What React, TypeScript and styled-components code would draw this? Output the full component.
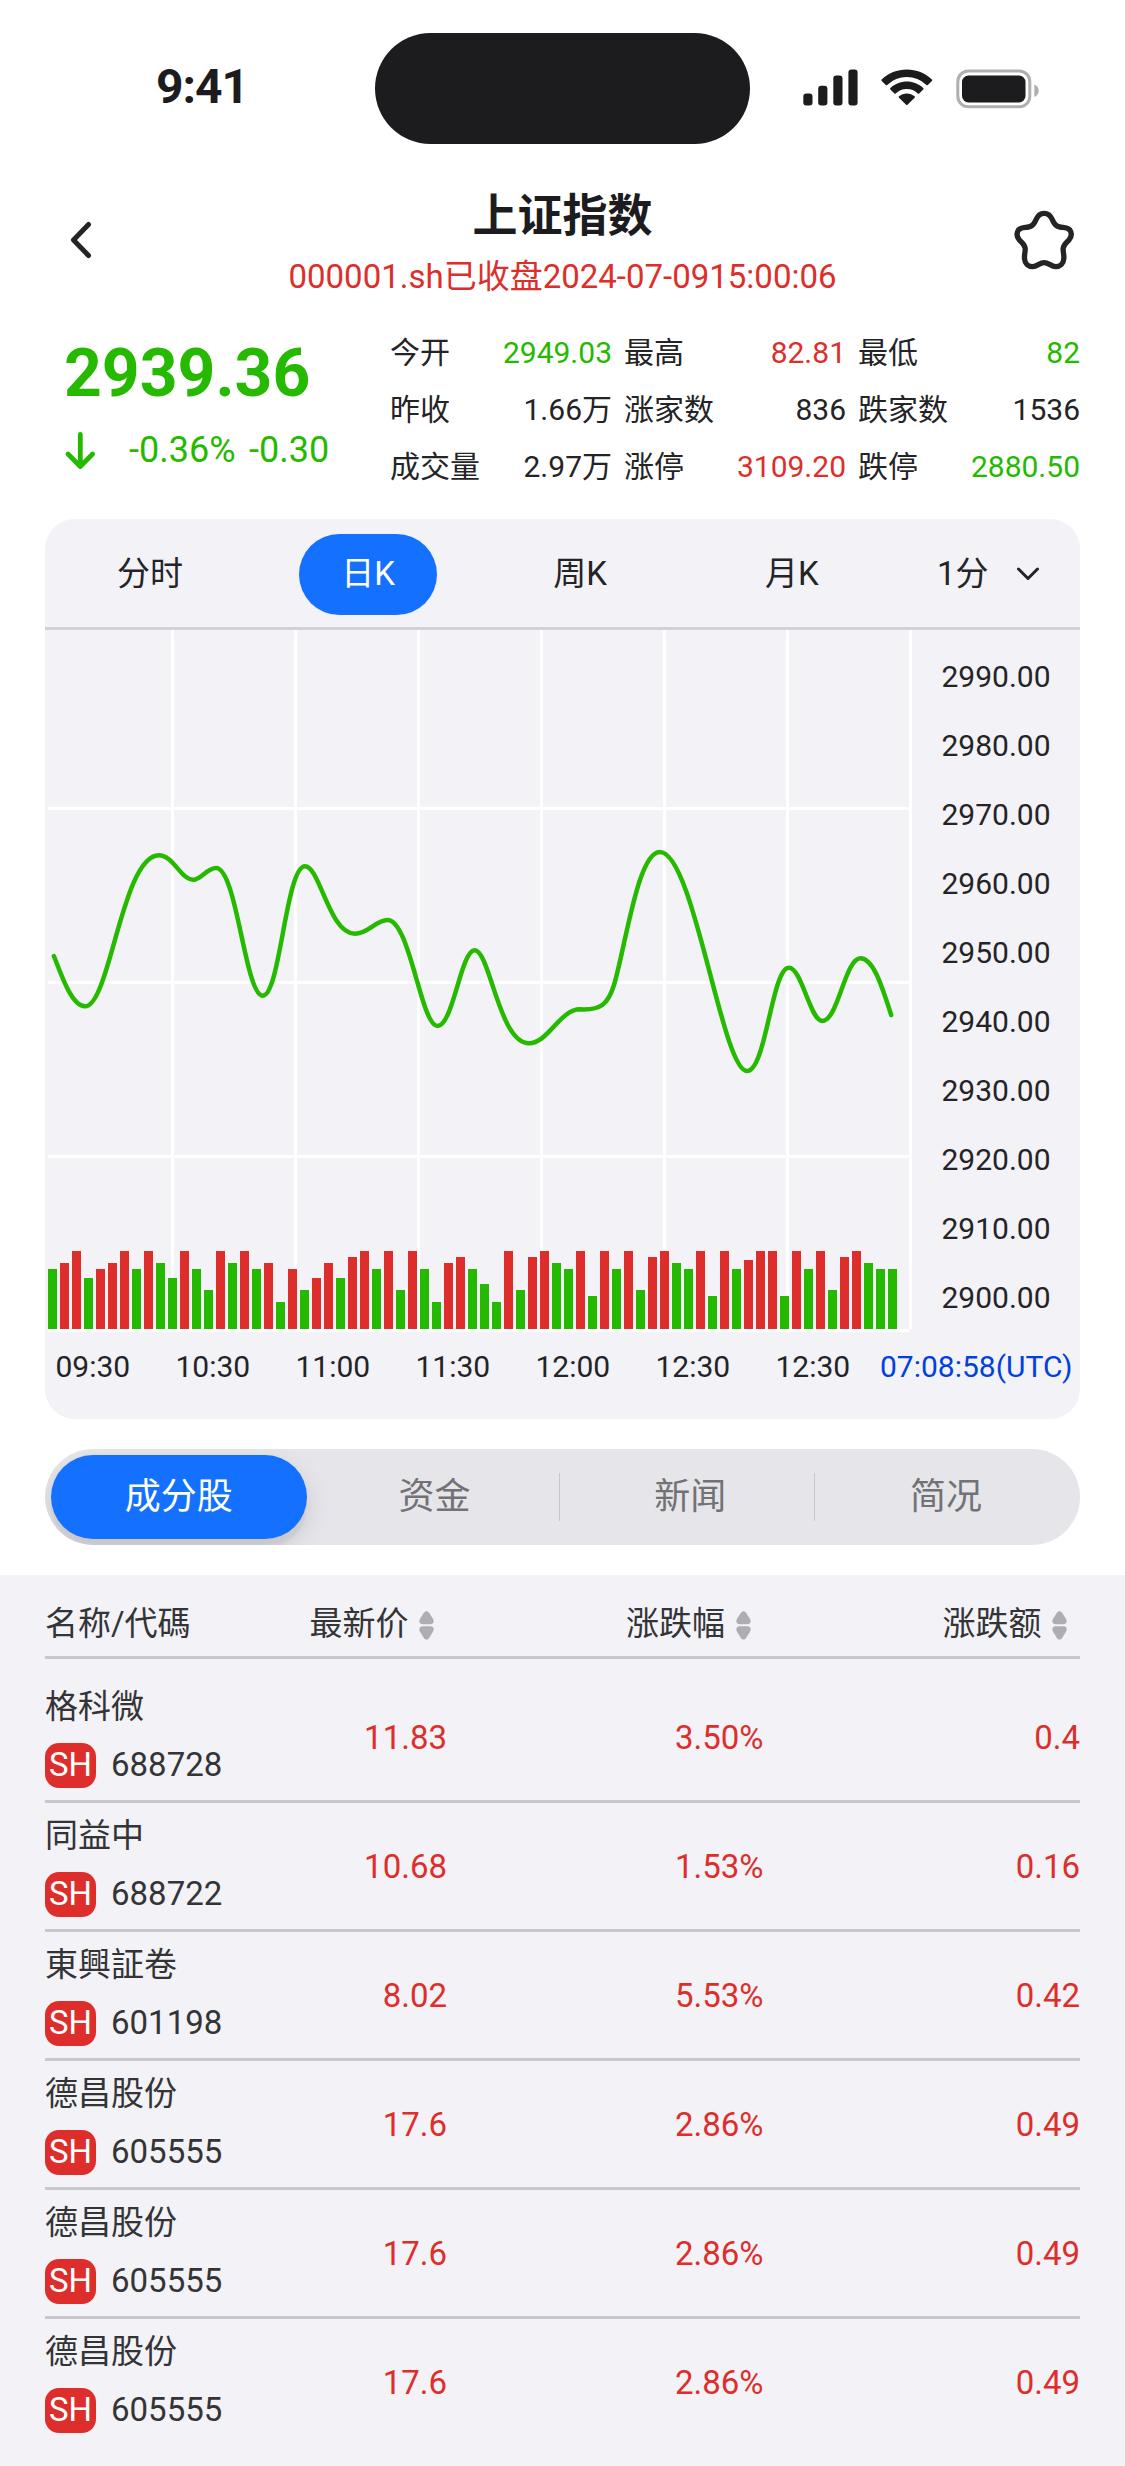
import React from 'react';
import styled, { createGlobalStyle } from 'styled-components';

const color = {
  ink: '#242426',
  listInk: '#343436',
  red: '#dd2e2b',
  green: '#25b900',
  blue: '#1471ff',
  link: '#0040dd',
  panel: '#f2f2f7',
  segment: '#e5e5ea',
  line: '#c7c7cc',
};

type Tone = 'ink' | 'red' | 'green';

const GlobalStyle = createGlobalStyle`
  *, *::before, *::after { box-sizing: border-box; }
  body {
    margin: 0;
    background: #fff;
    color: ${color.ink};
    font-family: Roboto, "Noto Sans CJK SC", sans-serif;
    font-size: 33px;
  }
  svg { display: block; flex: none; }
`;

const Screen = styled.main`
  display: flex;
  flex-direction: column;
  width: 1125px;
  height: 2466px;
  overflow: hidden;
  background: #fff;
`;

/* ---------- status bar ---------- */

const StatusBar = styled.div`
  display: grid;
  grid-template-columns: repeat(3, 375px);
  align-items: center;
  height: 177px;
`;

const Clock = styled.div`
  padding-left: 156px;
  font-size: 48px;
  font-weight: 700;
  line-height: 60px;
  letter-spacing: -1px;
  color: #1c1c1e;
  margin-top: -3px;
`;

const Island = styled.div`
  height: 111px;
  border-radius: 56px;
  background: #1c1c1e;
`;

const Indicators = styled.div`
  display: flex;
  align-items: center;
  padding-left: 53px;
`;

function StatusIcons() {
  return (
    <Indicators>
      <svg width="240" height="40" viewBox="0 0 240 40" fill="#1c1c1e">
        <rect x="0.3" y="24.5" width="9.2" height="12" rx="3" />
        <rect x="15.2" y="16.8" width="9.2" height="19.7" rx="3" />
        <rect x="30.3" y="6.5" width="9.2" height="30" rx="3" />
        <rect x="45.4" y="0.5" width="9.2" height="36" rx="3" />
        <path d="M103.8 0.5c9.6 0 18.5 3.6 25.1 10.1a.9.9 0 0 1 0 1.3l-4.1 4a1 1 0 0 1-1.4 0a28.5 28.5 0 0 0-39.2 0a1 1 0 0 1-1.4 0l-4.1-4a.9.9 0 0 1 0-1.3C85.3 4.1 94.2 0.5 103.8 0.5z" />
        <path d="M103.8 12.5c6.2 0 12 2.4 16.4 6.5a.9.9 0 0 1 0 1.4l-4 4a1 1 0 0 1-1.4 0a16.2 16.2 0 0 0-22 0a1 1 0 0 1-1.4 0l-4-4a.9.9 0 0 1 0-1.4c4.4-4.1 10.2-6.5 16.4-6.5z" />
        <path d="M103.8 24.4c3 0 5.7 1.1 7.8 2.9a.9.9 0 0 1 0 1.4l-7.1 7a1 1 0 0 1-1.4 0l-7.1-7a.9.9 0 0 1 0-1.4c2.1-1.8 4.8-2.9 7.8-2.9z" />
        <rect x="154.8" y="2" width="72" height="35.8" rx="10.5" fill="none" stroke="#afafaf" strokeWidth="3" />
        <rect x="159" y="6.5" width="63.5" height="27" rx="6.5" />
        <path d="M231.3 15.5v12.5c2.7-1.1 4.5-3.5 4.5-6.25s-1.8-5.15-4.5-6.25z" fill="#afafaf" />
      </svg>
    </Indicators>
  );
}

/* ---------- title bar ---------- */

const NavBar = styled.header`
  display: flex;
  align-items: center;
  justify-content: space-between;
  height: 126px;
  padding: 0 45px;
`;

const NavButton = styled.button`
  display: flex;
  align-items: center;
  justify-content: center;
  width: 72px;
  height: 72px;
  padding: 0;
  border: 0;
  background: none;
`;

const TitleBlock = styled.div`
  display: flex;
  flex-direction: column;
  align-items: center;
  gap: 6px;
  padding-top: 8px;
`;

const Title = styled.h1`
  margin: 0;
  font-size: 45px;
  font-weight: 700;
  line-height: 60px;
  color: #1c1c1e;
`;

const Subtitle = styled.p`
  margin: 0;
  line-height: 48px;
  color: ${color.red};
`;

/* ---------- quote ---------- */

const Quote = styled.section`
  display: flex;
  justify-content: space-between;
  height: 216px;
  padding: 21px 45px 0 63px;
`;

const PriceBlock = styled.div`
  display: flex;
  flex-direction: column;
  gap: 14px;
  padding-top: 11px;
  color: ${color.green};
`;

const Price = styled.div`
  padding-left: 1px;
  font-size: 66px;
  font-weight: 700;
  line-height: 78px;
`;

const Change = styled.div`
  display: flex;
  align-items: center;
  gap: 30px;
  padding-top: 1px;
  font-size: 36px;
  line-height: 45px;
`;

const ChangeFigures = styled.span`
  display: flex;
  gap: 13.5px;
`;

const Stats = styled.div`
  display: grid;
  grid-template-columns: repeat(3, 222px);
  column-gap: 12px;
  grid-auto-rows: 57px;
`;

const Stat = styled.div`
  display: flex;
  justify-content: space-between;
  font-size: 30px;
  line-height: 57px;
`;

const StatValue = styled.span<{ $tone: Tone }>`
  color: ${(p) => color[p.$tone]};
`;

const stats: [string, string, Tone][] = [
  ['今开', '2949.03', 'green'],
  ['最高', '82.81', 'red'],
  ['最低', '82', 'green'],
  ['昨收', '1.66万', 'ink'],
  ['涨家数', '836', 'ink'],
  ['跌家数', '1536', 'ink'],
  ['成交量', '2.97万', 'ink'],
  ['涨停', '3109.20', 'red'],
  ['跌停', '2880.50', 'green'],
];

/* ---------- chart panel ---------- */

const ChartPanel = styled.section`
  margin: 0 45px;
  height: 900px;
  border-radius: 30px;
  background: ${color.panel};
`;

const PeriodTabs = styled.div`
  display: flex;
  align-items: flex-start;
  justify-content: space-between;
  height: 111px;
  padding: 15px 30px 0;
  border-bottom: 3px solid #d1d1d6;
`;

const PeriodTab = styled.button<{ $active?: boolean }>`
  height: 81px;
  padding: 0 42px 2px;
  border: 0;
  border-radius: 41px;
  background: ${(p) => (p.$active ? color.blue : 'transparent')};
  color: ${(p) => (p.$active ? '#fff' : color.ink)};
  font: inherit;
  line-height: 79px;
`;

const IntervalSelect = styled.button`
  display: flex;
  align-items: center;
  justify-content: space-between;
  width: 115px;
  padding: 0 10px 0 2px;
  border: 0;
  background: none;
  color: inherit;
  font: inherit;
  line-height: 79px;
`;

const ChartBody = styled.div`
  display: flex;
  height: 702px;
`;

const Plot = styled.div`
  position: relative;
  width: 867px;
  height: 702px;
`;

const Volume = styled.div`
  position: absolute;
  left: 3px;
  bottom: 3px;
  display: flex;
  align-items: flex-end;
  gap: 3px;
`;

const VolumeBar = styled.div<{ $up: boolean }>`
  width: 9px;
  background: ${(p) => (p.$up ? color.red : color.green)};
`;

const PriceAxis = styled.div`
  flex: 1;
  padding: 12px 0 0 29.5px;
  font-size: 30px;
  line-height: 69px;
`;

const TimeAxis = styled.div`
  display: flex;
  gap: 45px;
  padding: 12px 0 0 10.5px;
  font-size: 30px;
  line-height: 45px;
`;

const TimeLabel = styled.span`
  width: 75px;
`;

const UtcLabel = styled.span`
  margin-left: -15.5px;
  color: ${color.link};
`;

const volume =
  'G60 R66 R78 G51 R60 R66 R78 G60 R78 G66 G51 R78 G60 G39 R78 G66 R78 G60 R66 G27 R60 G39 R51 R66 G51 R72 R78 G60 R78 G39 R78 G60 G27 R66 R72 G60 G45 G27 R78 G39 R72 R78 G66 G60 R78 G33 R78 G60 R78 G39 R72 R78 G66 G60 R78 G33 R78 G60 R69 R78 R78 G33 R78 G60 R78 G39 R72 R78 G66 G60 G60'
    .split(' ')
    .map((bar) => ({ up: bar[0] === 'R', height: Number(bar.slice(1)) }));

const prices = [2990, 2980, 2970, 2960, 2950, 2940, 2930, 2920, 2910, 2900];
const times = ['09:30', '10:30', '11:00', '11:30', '12:00', '12:30', '12:30'];

const trend = [
  'M53.9 956C62 977 72 1006.3 85 1006.3',
  'C110 1006.3 122 855.3 159 855.3',
  'C173 855.3 181 879.7 193.2 879.7',
  'C201 879.7 207 868 216 868',
  'C237 868 245 995.7 262.9 995.7',
  'C280 995.7 286 866.3 305 866.3',
  'C320 866.3 329 933.7 355 933.7',
  'C368 933.7 376 920 387.5 920',
  'C410 920 421 1026 437.5 1026',
  'C453 1026 461 950.3 474.6 950.3',
  'C490 950.3 499 1043.3 529 1043.3',
  'C548 1043.3 560 1009.3 580 1009.3',
  'C601 1010.5 608 1004 614 985',
  'C626 944 638 852 659.8 852',
  'C694 852 722 1071 747 1071',
  'C766 1071 772 967.7 788.8 967.7',
  'C802 967.7 810 1021 822.3 1021',
  'C838 1021 845 958.3 860.5 958.3',
  'C874 958.3 883 990 891.2 1015',
].join('');

function Chart() {
  return (
    <Plot>
      <svg width="867" height="702" viewBox="45 630 867 702">
        {[171, 294, 417, 540, 663, 786, 909].map((x) => (
          <rect key={x} x={x} y="630" width="3" height="699" fill="#fff" />
        ))}
        {[807, 981, 1155, 1329].map((y) => (
          <rect key={y} x="48" y={y} width="861" height="3" fill="#fff" />
        ))}
        <path d={trend} fill="none" stroke={color.green} strokeWidth="4.5" strokeLinecap="round" strokeLinejoin="round" />
      </svg>
      <Volume>
        {volume.map((bar, i) => (
          <VolumeBar key={i} $up={bar.up} style={{ height: bar.height }} />
        ))}
      </Volume>
    </Plot>
  );
}

/* ---------- segmented control ---------- */

const Segmented = styled.nav`
  display: flex;
  margin: 30px 45px;
  height: 96px;
  padding: 6px;
  border-radius: 48px;
  background: ${color.segment};
  overflow: hidden;
`;

const Segment = styled.button<{ $active?: boolean; $divided?: boolean }>`
  display: flex;
  flex: 1;
  align-items: center;
  justify-content: center;
  padding: 0;
  border: 0;
  border-radius: 42px;
  background: ${(p) => (p.$active ? color.blue : 'transparent')};
  box-shadow: ${(p) => (p.$active ? '0 9px 24px rgba(0, 0, 0, 0.13), 0 9px 3px rgba(0, 0, 0, 0.04)' : 'none')};
  color: ${(p) => (p.$active ? '#fff' : '#727275')};
  font: inherit;
  font-size: 36px;
  line-height: 84px;

  &::before {
    content: '';
    display: ${(p) => (p.$divided ? 'block' : 'none')};
    width: 1px;
    height: 48px;
    margin-left: -4px;
    margin-right: auto;
    background: ${color.line};
  }

  &::after {
    content: '';
    display: ${(p) => (p.$divided ? 'block' : 'none')};
    width: 1px;
    margin-left: auto;
    margin-right: -4px;
  }
`;

/* ---------- stock list ---------- */

const List = styled.section`
  flex: 1;
  padding: 26px 45px 0;
  background: ${color.panel};
  color: ${color.listInk};
`;

const columns = `
  display: grid;
  grid-template-columns: 220px 182px 316.5px 316.5px;
  border-bottom: 3px solid ${color.line};
`;

const ListHead = styled.div`
  ${columns}
  height: 58px;
  margin-bottom: 15px;
  line-height: 45px;
`;

const SortHead = styled.div`
  display: flex;
  justify-content: flex-end;
  padding-right: 13px;
  gap: 10.5px;
`;

const SortIcon = styled.svg`
  margin-top: 10px;
`;

const Row = styled.div<{ $last: boolean }>`
  ${columns}
  align-items: center;
  height: 129px;
  ${(p) => p.$last && 'border-bottom-color: transparent;'}
`;

const Stock = styled.div`
  display: flex;
  flex-direction: column;
  gap: 16px;
  line-height: 41px;
  white-space: nowrap;
`;

const Code = styled.div`
  display: flex;
  gap: 15px;
  line-height: 43px;
`;

const Market = styled.span`
  width: 51px;
  height: 45px;
  border-radius: 14px;
  background: ${color.red};
  color: #fff;
  text-align: center;
`;

const Figure = styled.div`
  color: ${color.red};
  text-align: right;
  line-height: 45px;
`;

const stocks = [
  ['格科微', '688728', '11.83', '3.50%', '0.4'],
  ['同益中', '688722', '10.68', '1.53%', '0.16'],
  ['東興証卷', '601198', '8.02', '5.53%', '0.42'],
  ['德昌股份', '605555', '17.6', '2.86%', '0.49'],
  ['德昌股份', '605555', '17.6', '2.86%', '0.49'],
  ['德昌股份', '605555', '17.6', '2.86%', '0.49'],
];

function Sort({ label }: { label: string }) {
  return (
    <SortHead>
      {label}
      <SortIcon width="15" height="29" viewBox="0 0 15 29" fill="#aeaeb2">
        <path d="M4.9 1.7C6.3-0.4 8.7-0.4 10.1 1.7L13.8 7.6C15.6 10.6 14.5 13.3 11.4 13.3H3.6C0.5 13.3-0.6 10.6 1.2 7.6z" />
        <path d="M4.9 27C6.3 29 8.7 29 10.1 27L13.8 21.1C15.6 18 14.5 15.3 11.4 15.3H3.6C0.5 15.3-0.6 18 1.2 21.1z" />
      </SortIcon>
    </SortHead>
  );
}

export default function App() {
  return (
    <Screen lang="zh-CN">
      <GlobalStyle />
      <StatusBar>
        <Clock>9:41</Clock>
        <Island />
        <StatusIcons />
      </StatusBar>

      <NavBar>
        <NavButton aria-label="返回">
          <svg width="72" height="72" viewBox="45 204 72 72" fill="none" stroke={color.ink} strokeWidth="5" strokeLinecap="round" strokeLinejoin="round">
            <path d="M88.5 224.5L73.5 240L88.5 255.5" />
          </svg>
        </NavButton>
        <TitleBlock>
          <Title>上证指数</Title>
          <Subtitle>000001.sh已收盘2024-07-0915:00:06</Subtitle>
        </TitleBlock>
        <NavButton aria-label="收藏">
          <svg width="72" height="72" viewBox="22.5 12 216 216" fill="none" stroke={color.ink} strokeWidth="16" strokeLinejoin="round">
            <path d="M131 40C144 40 151 48 156 60C161 73 166 79 178 81C190 83 201 81 208 90C215 100 213 110 206 119C198 128 189 134 188 145C187 155 191 163 190 176C189 191 179 200 165 200C152 199 144 188 131 188C118 188 110 199 97 200C83 200 73 191 72 176C71 163 75 155 74 145C73 134 64 128 56 119C49 110 47 100 54 90C61 81 72 83 84 81C96 79 101 73 106 60C111 48 118 40 131 40z" />
          </svg>
        </NavButton>
      </NavBar>

      <Quote>
        <PriceBlock>
          <Price>2939.36</Price>
          <Change>
            <svg width="36" height="42" viewBox="63 430 36 42" fill="none" stroke={color.green} strokeWidth="4.8" strokeLinecap="round" strokeLinejoin="round">
              <path d="M80.3 434.5V466M68 454L80.3 466.5L92.6 454" />
            </svg>
            <ChangeFigures>
              <span>-0.36%</span>
              <span>-0.30</span>
            </ChangeFigures>
          </Change>
        </PriceBlock>
        <Stats>
          {stats.map(([label, value, tone]) => (
            <Stat key={label}>
              <span>{label}</span>
              <StatValue $tone={tone}>{value}</StatValue>
            </Stat>
          ))}
        </Stats>
      </Quote>

      <ChartPanel>
        <PeriodTabs>
          <PeriodTab>分时</PeriodTab>
          <PeriodTab $active>日K</PeriodTab>
          <PeriodTab>周K</PeriodTab>
          <PeriodTab>月K</PeriodTab>
          <IntervalSelect>
            1分
            <svg width="24" height="14" viewBox="0 0 24 14" fill="none" stroke={color.ink} strokeWidth="3" strokeLinecap="round" strokeLinejoin="round">
              <path d="M2.5 2L12 11.5L21.5 2" />
            </svg>
          </IntervalSelect>
        </PeriodTabs>
        <ChartBody>
          <Chart />
          <PriceAxis>
            {prices.map((price) => (
              <div key={price}>{price.toFixed(2)}</div>
            ))}
          </PriceAxis>
        </ChartBody>
        <TimeAxis>
          {times.map((time, i) => (
            <TimeLabel key={i}>{time}</TimeLabel>
          ))}
          <UtcLabel>07:08:58(UTC)</UtcLabel>
        </TimeAxis>
      </ChartPanel>

      <Segmented>
        <Segment $active>成分股</Segment>
        <Segment>资金</Segment>
        <Segment $divided>新闻</Segment>
        <Segment $divided>简况</Segment>
      </Segmented>

      <List>
        <ListHead>
          <div>名称/代碼</div>
          <Sort label="最新价" />
          <Sort label="涨跌幅" />
          <Sort label="涨跌额" />
        </ListHead>
        {stocks.map(([name, code, price, percent, amount], i) => (
          <Row key={i} $last={i === stocks.length - 1}>
            <Stock>
              <span>{name}</span>
              <Code>
                <Market>SH</Market>
                <span>{code}</span>
              </Code>
            </Stock>
            <Figure>{price}</Figure>
            <Figure>{percent}</Figure>
            <Figure>{amount}</Figure>
          </Row>
        ))}
      </List>
    </Screen>
  );
}
